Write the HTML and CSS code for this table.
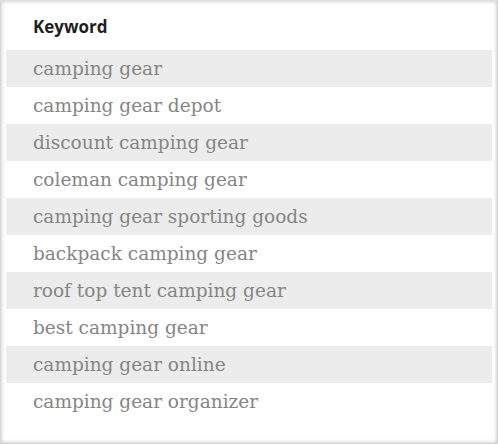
FILE: index.html
```html
<!DOCTYPE html>
<html>
<head>
<meta charset="utf-8">
<link rel="stylesheet" href="styles.css">
</head>
<body>
<div class="card">
  <div class="header">Keyword</div>
  <ul class="list">
    <li class="row">camping gear</li>
    <li class="row">camping gear depot</li>
    <li class="row">discount camping gear</li>
    <li class="row">coleman camping gear</li>
    <li class="row">camping gear sporting goods</li>
    <li class="row">backpack camping gear</li>
    <li class="row">roof top tent camping gear</li>
    <li class="row">best camping gear</li>
    <li class="row">camping gear online</li>
    <li class="row">camping gear organizer</li>
  </ul>
</div>
</body>
</html>
```
FILE: styles.css
```css
html, body {
  margin: 0;
  padding: 0;
  background: #fff;
}
.card {
  width: 498px;
  height: 444px;
  box-sizing: border-box;
  border-left: 1px solid #d8d8d8;
  border-top: 1px solid #e0e0e0;
  border-right: 1px solid #d0d0d0;
  border-bottom: 1px solid #d0d0d0;
  box-shadow: inset 0 0 4px rgba(0,0,0,0.25);
  padding: 0 5px 0 5px;
  overflow: hidden;
}
.header {
  height: 49px;
  box-sizing: border-box;
  padding: 15px 0 0 27px;
  font-family: "Open Sans", sans-serif;
  font-weight: 700;
  font-size: 17px;
  color: #1f1f1f;
  line-height: 22px;
}
.list {
  list-style: none;
  margin: 0;
  padding: 0;
}
.row {
  height: 37px;
  line-height: 37px;
  padding-left: 27px;
  font-family: "DejaVu Serif", serif;
  font-size: 18.5px;
  color: #858585;
}
.row:nth-child(odd) {
  background: #ececec;
}
```
